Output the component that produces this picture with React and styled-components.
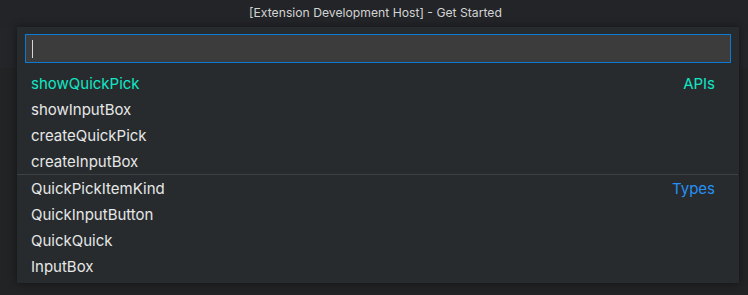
import React from "react";
import styled, { createGlobalStyle } from "styled-components";

const GlobalStyle = createGlobalStyle`
  html, body {
    margin: 0;
    padding: 0;
    background: #222427;
  }
  body {
    font-family: Inter, "Noto Sans", "Liberation Sans", sans-serif;
    -webkit-font-smoothing: antialiased;
  }
`;

const groups = [
  {
    label: "APIs",
    labelColor: "#12e6c6",
    items: ["showQuickPick", "showInputBox", "createQuickPick", "createInputBox"],
  },
  {
    label: "Types",
    labelColor: "#2690f5",
    items: ["QuickPickItemKind", "QuickInputButton", "QuickQuick", "InputBox"],
  },
];

export default function App() {
  return (
    <>
      <GlobalStyle />
      <Window>
        <TitleBar>[Extension Development Host] - Get Started</TitleBar>
        <Workbench>
          <QuickPick>
            <InputWrap>
              <Input>
                <Caret />
              </Input>
            </InputWrap>
            <List>
              {groups.map((group, gi) => (
                <Group key={group.label} $separated={gi > 0}>
                  {group.items.map((item, i) => (
                    <Row key={item}>
                      <Label $active={gi === 0 && i === 0}>{item}</Label>
                      {i === 0 && (
                        <GroupLabel $color={group.labelColor}>
                          {group.label}
                        </GroupLabel>
                      )}
                    </Row>
                  ))}
                </Group>
              ))}
            </List>
          </QuickPick>
        </Workbench>
      </Window>
    </>
  );
}

const Window = styled.div`
  width: 748px;
  height: 295px;
  display: flex;
  flex-direction: column;
  background: #222427;
  overflow: hidden;
`;

const TitleBar = styled.div`
  height: 27px;
  flex-shrink: 0;
  display: flex;
  align-items: center;
  justify-content: center;
  padding: 0 0 2px 3px;
  box-sizing: border-box;
  color: #d2d3d4;
  font-size: 12.2px;
`;

const Workbench = styled.div`
  flex: 1;
  padding-left: 17px;
  background: linear-gradient(#232528 0 41px, #212325 41px);
`;

const QuickPick = styled.div`
  width: 722px;
  background: #272b2d;
  box-shadow: 0 0 8px rgba(0, 0, 0, 0.45);
  padding-bottom: 4px;
`;

const InputWrap = styled.div`
  padding: 7px 8px 7px 8px;
`;

const Input = styled.div`
  height: 29px;
  box-sizing: border-box;
  border: 1px solid #0c7bd6;
  background: #3c3c3c;
  display: flex;
  align-items: center;
  padding-left: 6px;
`;

const Caret = styled.span`
  width: 1px;
  height: 18px;
  background: #d6d6d6;
`;

const List = styled.div`
  display: flex;
  flex-direction: column;
`;

const Group = styled.div`
  border-top: ${(p) => (p.$separated ? "1px solid #3d4143" : "none")};
  margin-right: 1px;
`;

const Row = styled.div`
  height: 26px;
  display: flex;
  align-items: center;
  justify-content: space-between;
  padding: 0 23px 0 14px;
`;

const Label = styled.span`
  font-size: 15px;
  color: ${(p) => (p.$active ? "#12e6c6" : "#e6e7e7")};
`;

const GroupLabel = styled.span`
  font-size: 15px;
  color: ${(p) => p.$color};
`;
